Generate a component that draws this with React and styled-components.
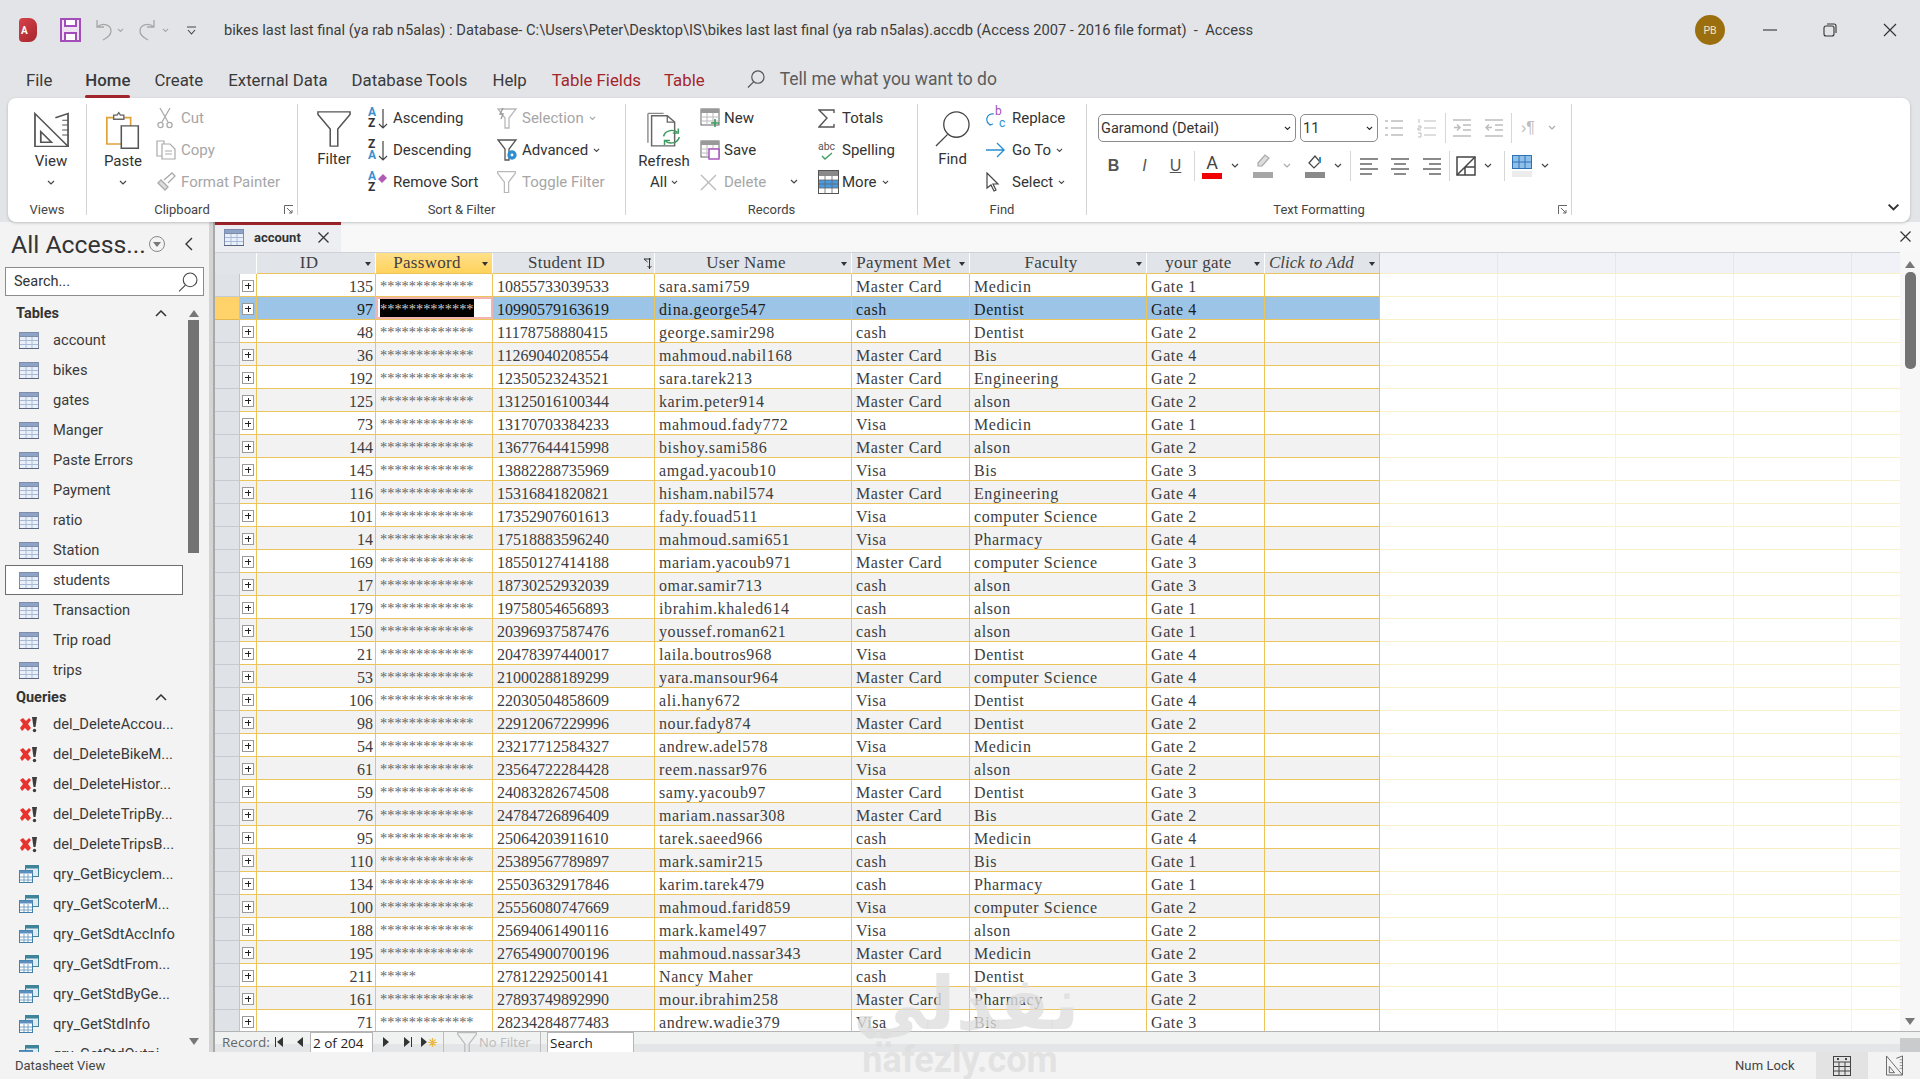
import React from "react";
import styled, { createGlobalStyle } from "styled-components";

const GlobalStyle = createGlobalStyle`
  html, body { margin: 0; padding: 0; overflow: hidden; background: #f3f3f3; }
  * { box-sizing: border-box; }
`;

const UI = `Roboto, "Liberation Sans", sans-serif`;
const SERIF = `"Liberation Serif", serif`;

const rows = [
  [135, "10855733039533", "sara.sami759", "Master Card", "Medicin", "Gate 1"],
  [97, "10990579163619", "dina.george547", "cash", "Dentist", "Gate 4"],
  [48, "11178758880415", "george.samir298", "cash", "Dentist", "Gate 2"],
  [36, "11269040208554", "mahmoud.nabil168", "Master Card", "Bis", "Gate 4"],
  [192, "12350523243521", "sara.tarek213", "Master Card", "Engineering", "Gate 2"],
  [125, "13125016100344", "karim.peter914", "Master Card", "alson", "Gate 2"],
  [73, "13170703384233", "mahmoud.fady772", "Visa", "Medicin", "Gate 1"],
  [144, "13677644415998", "bishoy.sami586", "Master Card", "alson", "Gate 2"],
  [145, "13882288735969", "amgad.yacoub10", "Visa", "Bis", "Gate 3"],
  [116, "15316841820821", "hisham.nabil574", "Master Card", "Engineering", "Gate 4"],
  [101, "17352907601613", "fady.fouad511", "Visa", "computer Science", "Gate 2"],
  [14, "17518883596240", "mahmoud.sami651", "Visa", "Pharmacy", "Gate 4"],
  [169, "18550127414188", "mariam.yacoub971", "Master Card", "computer Science", "Gate 3"],
  [17, "18730252932039", "omar.samir713", "cash", "alson", "Gate 3"],
  [179, "19758054656893", "ibrahim.khaled614", "cash", "alson", "Gate 1"],
  [150, "20396937587476", "youssef.roman621", "cash", "alson", "Gate 1"],
  [21, "20478397440017", "laila.boutros968", "Visa", "Dentist", "Gate 4"],
  [53, "21000288189299", "yara.mansour964", "Master Card", "computer Science", "Gate 4"],
  [106, "22030504858609", "ali.hany672", "Visa", "Dentist", "Gate 4"],
  [98, "22912067229996", "nour.fady874", "Master Card", "Dentist", "Gate 2"],
  [54, "23217712584327", "andrew.adel578", "Visa", "Medicin", "Gate 2"],
  [61, "23564722284428", "reem.nassar976", "Visa", "alson", "Gate 2"],
  [59, "24083282674508", "samy.yacoub97", "Master Card", "Dentist", "Gate 3"],
  [76, "24784726896409", "mariam.nassar308", "Master Card", "Bis", "Gate 2"],
  [95, "25064203911610", "tarek.saeed966", "cash", "Medicin", "Gate 4"],
  [110, "25389567789897", "mark.samir215", "cash", "Bis", "Gate 1"],
  [134, "25503632917846", "karim.tarek479", "cash", "Pharmacy", "Gate 1"],
  [100, "25556080747669", "mahmoud.farid859", "Visa", "computer Science", "Gate 2"],
  [188, "25694061490116", "mark.kamel497", "Visa", "alson", "Gate 2"],
  [195, "27654900700196", "mahmoud.nassar343", "Master Card", "Medicin", "Gate 2"],
  [211, "27812292500141", "Nancy Maher", "cash", "Dentist", "Gate 3"],
  [161, "27893749892990", "mour.ibrahim258", "Master Card", "Pharmacy", "Gate 2"],
  [71, "28234284877483", "andrew.wadie379", "Visa", "Bis", "Gate 3"],
];

const tables = ["account", "bikes", "gates", "Manger", "Paste Errors", "Payment", "ratio", "Station", "students", "Transaction", "Trip road", "trips"];
const deletes = ["del_DeleteAccou...", "del_DeleteBikeM...", "del_DeleteHistor...", "del_DeleteTripBy...", "del_DeleteTripsB..."];
const selects = ["qry_GetBicyclem...", "qry_GetScoterM...", "qry_GetSdtAccInfo", "qry_GetSdtFrom...", "qry_GetStdByGe...", "qry_GetStdInfo", "qry_GetStdOutpi..."];

/* ---------- icons ---------- */
const Chev = ({ w = 8, c = "#444" }) => (
  <svg width={w} height={w * 0.7} viewBox="0 0 8 5.6"><path d="M1 1l3 3 3-3" fill="none" stroke={c} strokeWidth="1.2" /></svg>
);
const SetSquare = ({ w = 35, h = 36 }) => (
  <svg width={w} height={h} viewBox="0 0 36 44" preserveAspectRatio="none" fill="none" stroke="#555" strokeWidth="1.8">
    <path d="M1 2l34 40H1z" /><path d="M7 24l11 13H7z" />
    <path d="M22 7l13-5v40" /><path d="M29 10h6M29 16h6M29 22h6M29 28h6" strokeWidth="1.2" />
  </svg>
);
const PasteIcon = () => (
  <svg width="34" height="38" viewBox="0 0 40 46" preserveAspectRatio="none" fill="none">
    <path d="M1 8h28v32H1z" stroke="#e0a33a" strokeWidth="2" fill="#fff" />
    <path d="M9 8V5h4l2-3 2 3h4v5H9z" stroke="#666" strokeWidth="1.6" fill="#fff" />
    <path d="M18 18h20v27H18z" stroke="#555" strokeWidth="1.8" fill="#fff" />
  </svg>
);
const Funnel = ({ w = 36, h, c = "#555", sw = 1.6 }) => (
  <svg width={w} height={h || w * 1.17} viewBox="0 0 36 42" preserveAspectRatio="none" fill="none" stroke={c} strokeWidth={sw}>
    <path d="M1 1h34v3L22 21v20h-8V21L1 4z" />
  </svg>
);
const Scissors = () => (
  <svg width="18" height="22" viewBox="0 0 18 22" fill="none" stroke="#aaa" strokeWidth="1.3">
    <path d="M4 1l8 14M14 1L6 15" /><circle cx="4.5" cy="18" r="2.6" /><circle cx="13.5" cy="18" r="2.6" />
  </svg>
);
const CopyIcon = () => (
  <svg width="20" height="20" viewBox="0 0 20 20" fill="none" stroke="#aaa" strokeWidth="1.2">
    <path d="M1 1h7v15H1z" /><path d="M6 4h8l5 5v10H6z" fill="#fff" /><path d="M9 11h7M9 14h7" />
  </svg>
);
const Brush = () => (
  <svg width="20" height="20" viewBox="0 0 20 20" fill="none" stroke="#aaa" strokeWidth="1.3">
    <path d="M2 11l7 7 3-3-7-7z" fill="#ddd" /><path d="M8 8l8-7 3 3-7 7" />
  </svg>
);
const SortIcon = ({ top = "A", bottom = "Z", mark }) => (
  <IconStack>
    <AZ $c={top === "A" ? "#3a8fd0" : "#333"}>{top}</AZ>
    <AZ $c={bottom === "A" ? "#3a8fd0" : "#333"} $low>{bottom}</AZ>
    {mark === "arrow" && (
      <svg width="10" height="20" viewBox="0 0 10 20" fill="none" stroke="#444" strokeWidth="1.2"><path d="M5 0v19M1 15l4 4 4-4" /></svg>
    )}
    {mark === "eraser" && (
      <svg width="11" height="11" viewBox="0 0 11 11"><path d="M1 6l5-5 4 4-5 5z" fill="#b05bb5" /></svg>
    )}
  </IconStack>
);
const Bolt = () => (
  <svg width="20" height="22" viewBox="0 0 20 22" fill="none" stroke="#b9b9b9" strokeWidth="1.3">
    <path d="M1 2h18L12 11v10H8V11z" /><path d="M6 1L3 7h3l-2 5" stroke="#999" />
  </svg>
);
const AdvFilter = () => (
  <svg width="22" height="22" viewBox="0 0 22 22" fill="none" stroke="#555" strokeWidth="1.3">
    <path d="M1 1h18l-7 9v11H8V10z" />
    <circle cx="15" cy="16" r="4" fill="#2a8fd0" stroke="#2a8fd0" /><circle cx="15" cy="16" r="1.4" fill="#fff" stroke="none" />
  </svg>
);
const RefreshIcon = () => (
  <svg width="35" height="38" viewBox="0 0 38 48" preserveAspectRatio="none" fill="none">
    <path d="M1 3h17M1 3v37" stroke="#888" strokeWidth="1.5" />
    <path d="M5 6h17l8 8v30H5z" stroke="#666" strokeWidth="1.6" fill="#fff" />
    <path d="M22 6v8h8" stroke="#666" strokeWidth="1.4" />
    <path d="M18 32a9 9 0 0 1 15-5M35 33a9 9 0 0 1-15 5" stroke="#3d9b5f" strokeWidth="1.8" fill="none" />
    <path d="M34 22v6h-6M19 43v-6h6" stroke="#3d9b5f" strokeWidth="1.6" />
  </svg>
);
const SheetSmall = ({ kind }) => (
  <svg width="20" height="20" viewBox="0 0 20 20" fill="none">
    <rect x="1" y="1" width="18" height="16" fill="#fff" stroke="#666" />
    <rect x="1" y="1" width="18" height="4" fill="#999" />
    <path d="M1 9h18M1 13h18M7 5v12M13 5v12" stroke="#bbb" />
    {kind === "new" && <path d="M15 11v8M11 15h8" stroke="#3d9b5f" strokeWidth="1.6" />}
    {kind === "save" && <rect x="9" y="9" width="10" height="10" fill="#fff" stroke="#a34dbb" strokeWidth="1.4" />}
  </svg>
);
const XMark = () => (
  <svg width="17" height="17" viewBox="0 0 17 17" fill="none" stroke="#bbb" strokeWidth="1.4"><path d="M1 1l15 15M16 1L1 16" /></svg>
);
const Sigma = () => (
  <svg width="17" height="19" viewBox="0 0 17 19" fill="none" stroke="#555" strokeWidth="1.4"><path d="M16 4V1H1l8 8-8 9h15v-3" /></svg>
);
const Spell = () => (
  <SpellBox>
    <span>abc</span>
    <svg width="12" height="8" viewBox="0 0 12 8" fill="none" stroke="#3d9b5f" strokeWidth="1.3"><path d="M1 4l3 3 7-6" /></svg>
  </SpellBox>
);
const MoreIcon = () => (
  <svg width="21" height="24" viewBox="0 0 21 24" fill="none">
    <rect x="0.5" y="0.5" width="20" height="23" fill="#fff" stroke="#555" />
    <rect x="1" y="1" width="19" height="5" fill="#8a8a8a" />
    <rect x="1" y="10" width="19" height="8" fill="#4a9ae0" />
    <path d="M1 10h19M1 14h19M1 18h19M7 6v17M14 6v17" stroke="#666" strokeWidth="0.8" />
  </svg>
);
const Lens = ({ s = 38, c = "#444", sw = 1.3 }) => (
  <svg width={s} height={s} viewBox="0 0 38 38" fill="none" stroke={c} strokeWidth={sw * (38 / s)}>
    <circle cx="23" cy="15" r="13" /><path d="M14 25L2 37" />
  </svg>
);
const ReplaceIcon = () => (
  <ReplaceBox>
    <b>b</b><i>c</i>
    <svg width="10" height="14" viewBox="0 0 10 14" fill="none" stroke="#2a8fd0" strokeWidth="1.2"><path d="M8 1a5 5 0 0 0-3 11M1 9l3 3 3-1" /></svg>
  </ReplaceBox>
);
const GoTo = () => (
  <svg width="19" height="16" viewBox="0 0 19 16" fill="none" stroke="#2a8fd0" strokeWidth="1.4"><path d="M0 8h18M11 1l7 7-7 7" /></svg>
);
const Arrow = () => (
  <svg width="14" height="20" viewBox="0 0 14 20" fill="#fff" stroke="#444" strokeWidth="1.2"><path d="M1 1v15l4-3 3 6 2-1-3-6h5z" /></svg>
);
const Launcher = () => (
  <svg width="10" height="10" viewBox="0 0 10 10" fill="none" stroke="#666"><path d="M0.5 9V0.5H9" /><path d="M3 3l5 5M8 5v3H5" /></svg>
);
const Lines = ({ kind }) => {
  const c = "#bdbdbd";
  if (kind === "bullets") return <svg width="20" height="20" viewBox="0 0 20 20" fill="none" stroke={c} strokeWidth="1.5"><path d="M7 3h12M7 10h12M7 17h12M1 3h3M1 10h3M1 17h3" /></svg>;
  if (kind === "numbers") return <svg width="20" height="20" viewBox="0 0 20 20" fill="none" stroke={c} strokeWidth="1.5"><path d="M7 3h12M7 10h12M7 17h12M2 1v4M1 8h3v2H1v2h3M1 15h3v4H1" strokeWidth="1" /></svg>;
  if (kind === "indent") return <svg width="20" height="20" viewBox="0 0 20 20" fill="none" stroke={c} strokeWidth="1.5"><path d="M1 2h18M11 7h8M11 12h8M1 18h18M2 9.5h6M5 6.5l3 3-3 3" /></svg>;
  return <svg width="20" height="20" viewBox="0 0 20 20" fill="none" stroke={c} strokeWidth="1.5"><path d="M1 2h18M11 7h8M11 12h8M1 18h18M8 9.5H2M5 6.5l-3 3 3 3" /></svg>;
};
const Align = ({ kind }) => {
  const d = { left: "M1 2h18M1 7h12M1 12h18M1 17h12", center: "M1 2h18M4 7h12M1 12h18M4 17h12", right: "M1 2h18M7 7h12M1 12h18M7 17h12" }[kind];
  return <svg width="20" height="19" viewBox="0 0 20 19" fill="none" stroke="#666" strokeWidth="1.5"><path d={d} /></svg>;
};
const BorderIcon = () => (
  <svg width="20" height="20" viewBox="0 0 20 20" fill="none" stroke="#444" strokeWidth="1.5"><rect x="1" y="1" width="18" height="18" /><path d="M1 19L19 1M9 11h10M9 11v8" /></svg>
);
const GridIcon = () => (
  <GridStack>
    <svg width="20" height="14" viewBox="0 0 20 14" fill="none"><rect x="0.5" y="0.5" width="19" height="13" fill="#8fc0ea" stroke="#2f73b5" /><path d="M0 7h20M7 0v14M13 0v14" stroke="#2f73b5" /></svg>
    <GridBar />
  </GridStack>
);
const Highlighter = () => (
  <ColorStack>
    <svg width="16" height="16" viewBox="0 0 16 16" fill="#ddd" stroke="#aaa" strokeWidth="1.2"><path d="M3 9l7-8 4 3-7 8H3z" /></svg>
    <ColorBar $c="#a6a6a6" />
  </ColorStack>
);
const FillIcon = () => (
  <ColorStack>
    <svg width="16" height="16" viewBox="0 0 16 16" fill="none" stroke="#444" strokeWidth="1.2"><path d="M2 9l6-7 5 6-6 6z" /><path d="M13 3v6" stroke="#2a8fd0" strokeWidth="2" /></svg>
    <ColorBar $c="#8a8a8a" />
  </ColorStack>
);
const TableGlyph = () => (
  <svg width="20" height="17" viewBox="0 0 20 17" fill="none">
    <rect x="0.5" y="0.5" width="19" height="16" fill="#eaf0fa" stroke="#7f8da8" />
    <rect x="0.5" y="0.5" width="19" height="4" fill="#8ea3c8" stroke="#7f8da8" />
    <path d="M1 8.5h18M1 12.5h18M7 5v11M13 5v11" stroke="#a9bad6" />
    <path d="M0 16.5h20" stroke="#59647c" />
  </svg>
);
const DeleteQuery = () => (
  <svg width="20" height="17" viewBox="0 0 20 17">
    <path d="M1 4l3-2 3 3 3-3 2 2-3 4 3 4-3 3-3-3-3 3-2-3 3-4z" fill="#e8322e" />
    <path d="M13 1h5l-1.500 10h-2z" fill="#3c3c3c" /><circle cx="15.500" cy="14.500" r="1.700" fill="#3c3c3c" />
  </svg>
);
const SelectQuery = () => (
  <svg width="20" height="18" viewBox="0 0 20 18" fill="none">
    <rect x="6.500" y="0.500" width="13" height="11" fill="#dfeaf2" stroke="#3f8499" />
    <rect x="6.500" y="0.500" width="13" height="3" fill="#3f8499" />
    <rect x="0.500" y="5.500" width="13" height="12" fill="#fff" stroke="#3f7fa8" />
    <rect x="0.500" y="5.500" width="13" height="3" fill="#5b8fc0" />
    <path d="M1 12h12M1 15h12M5 9v8M9 9v8" stroke="#7ba6c8" />
  </svg>
);

/* ---------- shell ---------- */
const Window = styled.div`
  position: relative;
  width: 1920px;
  height: 1079px;
  display: flex;
  flex-direction: column;
  overflow: hidden;
  background: #e2e4e8;
  font-family: ${UI};
  color: #333;
`;
const TitleBar = styled.div`
  height: 60px;
  display: flex;
  align-items: center;
  flex: none;
`;
const QuickSlot = styled.div`
  width: ${(p) => p.$w}px;
  margin-left: ${(p) => p.$ml || 0}px;
  display: flex;
  justify-content: center;
  align-items: center;
`;
const LogoBox = styled.div`
  width: 19px;
  height: 24px;
  border-radius: 4px 8px 8px 4px;
  background: linear-gradient(135deg, #d9414a, #a4262c);
  color: #fff;
  font-size: 10px;
  font-weight: 700;
  display: flex;
  align-items: center;
  padding-left: 2px;
`;
const TitleText = styled.div`
  flex: 1;
  margin-left: 28px;
  font-size: 14.700px;
  color: #3c3c3c;
  white-space: pre;
`;
const Avatar = styled.div`
  width: 30px;
  height: 30px;
  margin-right: 15px;
  border-radius: 50%;
  background: #9c6f0e;
  color: #f4e6c0;
  font-size: 10.500px;
  display: flex;
  align-items: center;
  justify-content: center;
`;
const WinBtn = styled.div`
  width: 60px;
  display: flex;
  justify-content: center;
`;
const TabBar = styled.div`
  height: 38px;
  flex: none;
  display: flex;
  align-items: stretch;
  padding-left: 26px;
`;
const Tab = styled.div`
  position: relative;
  margin-left: ${(p) => p.$ml}px;
  font-size: 16.800px;
  line-height: 40px;
  white-space: nowrap;
  color: ${(p) => (p.$ctx ? "#a4262c" : "#3a3a3a")};
  font-weight: ${(p) => (p.$active ? 500 : 400)};
  ${(p) => p.$active && `&::after { content: ""; position: absolute; left: 0; right: 0; bottom: 0; height: 3px; background: #a4262c; border-radius: 2px; }`}
`;
const TellMe = styled.div`
  margin-left: 42px;
  display: flex;
  align-items: center;
  gap: 15px;
  font-size: 17.500px;
  color: #5c5c5c;
`;

/* ---------- ribbon ---------- */
const Ribbon = styled.div`
  position: relative;
  z-index: 2;
  flex: none;
  height: 124px;
  margin: 0 10px 0 8px;
  padding: 6px 0 7px;
  display: flex;
  background: #fff;
  border-radius: 8px;
  box-shadow: 0 1px 3px rgba(0, 0, 0, 0.22);
`;
const Group = styled.div`
  position: relative;
  width: ${(p) => p.$w}px;
  flex: none;
  display: flex;
  flex-direction: column;
  border-right: 1px solid #d4d4d4;
`;
const GroupBody = styled.div`
  flex: none;
  height: 99px;
  display: flex;
  padding-left: ${(p) => p.$pad || 0}px;
`;
const GroupLabel = styled.div`
  flex: none;
  text-align: center;
  font-size: 13px;
  line-height: 14px;
  color: #444;
  padding-right: ${(p) => p.$offset || 0}px;
`;
const LaunchSpot = styled.div`
  position: absolute;
  right: 3px;
  bottom: 0;
  line-height: 0;
`;
const BigBtn = styled.div`
  width: ${(p) => p.$w}px;
  flex: none;
  display: flex;
  flex-direction: column;
  align-items: center;
  padding-top: 4px;
  font-size: 15px;
  color: #333;
`;
const BigIcon = styled.div`
  height: ${(p) => p.$h || 43}px;
  display: flex;
  align-items: center;
  justify-content: center;
`;
const BigText = styled.div`
  line-height: 21px;
  min-height: 21px;
  display: flex;
  align-items: center;
  gap: 4px;
`;
const SmallCol = styled.div`
  width: ${(p) => p.$w}px;
  flex: none;
  margin-top: -2px;
  display: flex;
  flex-direction: column;
`;
const SmallBtn = styled.div`
  height: 32px;
  display: flex;
  align-items: center;
  font-size: 15px;
  white-space: nowrap;
  color: ${(p) => (p.$off ? "#a6a6a6" : "#333")};
  & > span { margin-right: 5px; }
`;
const SmallIcon = styled.div`
  width: ${(p) => p.$w || 25}px;
  flex: none;
  display: flex;
  align-items: center;
`;
const ChevGap = styled.div`
  margin-left: ${(p) => p.$ml}px;
  line-height: 0;
`;
const IconStack = styled.div`
  position: relative;
  width: 21px;
  height: 24px;
  & > svg { position: absolute; right: 1px; top: 3px; }
`;
const AZ = styled.div`
  position: absolute;
  left: 0;
  top: ${(p) => (p.$low ? 11 : 0)}px;
  font-size: 12px;
  line-height: 12px;
  font-weight: 700;
  color: ${(p) => p.$c};
`;
const SpellBox = styled.div`
  display: flex;
  flex-direction: column;
  align-items: center;
  font-size: 10.500px;
  line-height: 11px;
  color: #555;
`;
const ReplaceBox = styled.div`
  position: relative;
  width: 21px;
  height: 24px;
  font-size: 12px;
  & > b { position: absolute; left: 9px; top: -2px; font-weight: 400; color: #a34dbb; }
  & > i { position: absolute; left: 13px; top: 10px; font-style: normal; color: #2a8fd0; }
  & > svg { position: absolute; left: 0; top: 7px; }
`;
const FmtRow = styled.div`
  height: ${(p) => p.$h}px;
  margin-top: ${(p) => p.$mt}px;
  display: flex;
  align-items: center;
`;
const Select = styled.div`
  width: ${(p) => p.$w}px;
  height: 28px;
  margin-left: ${(p) => p.$ml || 0}px;
  padding: 0 4px 0 2px;
  display: flex;
  align-items: center;
  justify-content: space-between;
  font-size: 14.500px;
  color: #333;
  border: 1px solid #8c8c8c;
  border-radius: 5px;
`;
const Slot = styled.div`
  width: ${(p) => p.$w}px;
  margin-left: ${(p) => p.$ml || 0}px;
  flex: none;
  display: flex;
  align-items: center;
  justify-content: center;
  line-height: 0;
`;
const Sep = styled.div`
  width: 1px;
  height: 30px;
  flex: none;
  margin-left: ${(p) => p.$ml || 0}px;
  background: #d6d6d6;
`;
const FontMark = styled.span`
  font-family: "Liberation Sans", sans-serif;
  font-size: 16px;
  line-height: 20px;
  color: #555;
  font-weight: ${(p) => (p.$b ? 700 : 400)};
  font-style: ${(p) => (p.$i ? "italic" : "normal")};
  text-decoration: ${(p) => (p.$u ? "underline" : "none")};
`;
const ParaMark = styled(FontMark)`
  color: #bdbdbd;
`;
const ColorStack = styled.div`
  display: flex;
  flex-direction: column;
  align-items: center;
  gap: 2px;
`;
const ColorBar = styled.div`
  width: 20px;
  height: 6px;
  background: ${(p) => p.$c};
`;
const FontA = styled.div`
  font-size: 18px;
  line-height: 17px;
  color: #444;
`;
const GridStack = styled(ColorStack)``;
const GridBar = styled.div`
  width: 20px;
  height: 6px;
  background: #ececec;
`;
const Collapse = styled.div`
  position: absolute;
  right: 10px;
  bottom: 10px;
  line-height: 0;
`;

/* ---------- main ---------- */
const Main = styled.div`
  flex: none;
  height: 830px;
  display: flex;
  background: #f3f3f3;
`;
const Nav = styled.div`
  width: 209px;
  flex: none;
  display: flex;
  flex-direction: column;
  background: #f3f3f3;
`;
const NavHead = styled.div`
  height: 45px;
  padding: 0 0 1px 11px;
  display: flex;
  align-items: center;
  font-size: 24.800px;
  color: #333;
`;
const NavHeadTitle = styled.div`
  width: 138px;
  white-space: nowrap;
`;
const NavCaret = styled.div`
  width: 16px;
  height: 16px;
  border: 1px solid #888;
  border-radius: 50%;
  display: flex;
  align-items: center;
  justify-content: center;
`;
const NavBack = styled.div`
  margin-left: 19px;
  line-height: 0;
`;
const NavSearch = styled.div`
  height: 29px;
  margin-left: 5px;
  width: 199px;
  padding: 0 5px 0 8px;
  flex: none;
  display: flex;
  align-items: center;
  justify-content: space-between;
  font-size: 14.500px;
  background: #fff;
  border: 1px solid #8c8c8c;
`;
const NavBody = styled.div`
  flex: 1;
  min-height: 0;
  margin-top: 5px;
  display: flex;
`;
const NavList = styled.div`
  width: 183px;
  flex: none;
  overflow: hidden;
`;
const NavSection = styled.div`
  height: 24px;
  padding: 0 16px;
  display: flex;
  align-items: center;
  justify-content: space-between;
  font-size: 14.500px;
  font-weight: 700;
  color: #333;
`;
const NavItem = styled.div`
  height: 30px;
  margin-left: 5px;
  padding-left: 14px;
  display: flex;
  align-items: center;
  gap: 14px;
  font-size: 14.700px;
  white-space: nowrap;
  color: #3a3a3a;
  ${(p) => p.$on && `background: #fff; border: 1px solid #6e6e6e; padding-left: 13px;`}
`;
const VBar = styled.div`
  display: flex;
  flex-direction: column;
  align-items: center;
  width: ${(p) => p.$w}px;
  flex: none;
  padding-top: ${(p) => p.$top}px;
  background: ${(p) => p.$bg || "transparent"};
`;
const UpTri = styled.div`
  width: 0;
  height: 0;
  border-left: 5.500px solid transparent;
  border-right: 5.500px solid transparent;
  border-bottom: 7px solid #777;
`;
const DownTri = styled(UpTri)`
  border-bottom: none;
  border-top: 7px solid #777;
  margin-top: auto;
  margin-bottom: ${(p) => p.$mb}px;
`;
const Thumb = styled.div`
  width: ${(p) => p.$w}px;
  height: ${(p) => p.$h}px;
  margin-top: ${(p) => p.$mt}px;
  background: #737373;
  border-radius: ${(p) => p.$r || 0}px;
`;
const Splitter = styled.div`
  width: 6px;
  flex: none;
  background: #d4d4d4;
  border-right: 2px solid #a9a9a9;
`;
const Doc = styled.div`
  flex: 1;
  min-width: 0;
  display: flex;
  flex-direction: column;
  background: #f8f8f8;
`;
const TabStrip = styled.div`
  height: 30px;
  flex: none;
  display: flex;
  justify-content: space-between;
  align-items: center;
`;
const DocTab = styled.div`
  width: 126px;
  height: 30px;
  padding: 0 0 3px 9px;
  display: flex;
  align-items: center;
  font-size: 13px;
  font-weight: 700;
  color: #333;
  background: #eceef2;
  border-top: 3px solid #a4262c;
  & > svg:first-child { margin-right: 10px; }
`;
const TabClose = styled.div`
  margin-left: 17px;
  line-height: 0;
`;
const StripClose = styled.div`
  margin: 0 9px 2px 0;
  line-height: 0;
`;
const Sheet = styled.div`
  flex: none;
  height: 779px;
  display: flex;
  background: #fff;
`;
const Grid = styled.div`
  width: 1685px;
  flex: none;
  overflow: hidden;
`;
const HeadRow = styled.div`
  height: 22px;
  display: flex;
  background: #f0f2f8;
  border-top: 1px solid #cfd2d6;
`;
const Row = styled.div`
  height: 23px;
  display: flex;
  border-bottom: 1px solid #ecc45c;
  background: ${(p) => (p.$sel ? "#9bc4e6" : p.$alt ? "#f2f2f2" : "#fff")};
`;
const Corner = styled.div`
  width: 42px;
  flex: none;
  background: #e1e4e8;
  border-right: 1px solid #fff;
`;
const HeadCell = styled.div`
  position: relative;
  width: ${(p) => p.$w}px;
  flex: none;
  padding-right: 14px;
  font-family: ${SERIF};
  font-style: ${(p) => (p.$it ? "italic" : "normal")};
  font-size: 17px;
  letter-spacing: ${(p) => (p.$it ? 0 : 0.3)}px;
  line-height: 19px;
  white-space: nowrap;
  overflow: hidden;
  text-align: ${(p) => (p.$it ? "left" : "center")};
  padding-left: ${(p) => (p.$it ? "4px" : "0")};
  color: ${(p) => (p.$it ? "#444" : "#3f3f3f")};
  background: ${(p) => (p.$on ? "linear-gradient(#ffe08a, #ffd25c)" : "#e1e4e8")};
  border-right: 1px solid ${(p) => (p.$it ? "#ecc45c" : "#fff")};
  border-bottom: 1px solid #ecc45c;
`;
const HeadDrop = styled.div`
  position: absolute;
  right: 4px;
  top: 9px;
  width: 0;
  height: 0;
  border-left: 3.500px solid transparent;
  border-right: 3.500px solid transparent;
  border-top: 4px solid #333;
`;
const SortMark = styled.div`
  position: absolute;
  right: 1px;
  top: 5px;
  line-height: 0;
`;
const FillHead = styled.div`
  width: 118px;
  flex: none;
  border-right: 1px solid #e3e6ee;
  border-bottom: 1px solid #f6efc8;
`;
const Fill = styled.div`
  width: 118px;
  flex: none;
  height: 23px;
  margin-bottom: -1px;
  background: #fff;
  border-right: 1px solid #f8f3d4;
  border-bottom: 1px solid #f8f1cb;
`;
const Selector = styled.div`
  width: 24px;
  flex: none;
  margin-bottom: -1px;
  background: ${(p) => (p.$sel ? "#ffd36a" : "#dfe3e8")};
  border-bottom: 1px solid ${(p) => (p.$sel ? "#e5b84f" : "#c6cbd1")};
`;
const Expander = styled.div`
  width: 18px;
  flex: none;
  padding-top: 1px;
  display: flex;
  align-items: center;
  justify-content: center;
  border-right: 1px solid #ecc45c;
  border-left: 1px solid #ecc45c;
`;
const PlusBox = styled.div`
  width: 10px;
  height: 10px;
  font-size: 0;
  background:
    linear-gradient(#222, #222) center / 6px 1px no-repeat,
    linear-gradient(#222, #222) center / 1px 6px no-repeat,
    #fff;
  outline: 1px solid #9a9a9a;
`;
const Cell = styled.div`
  width: ${(p) => p.$w}px;
  flex: none;
  padding: 0 ${(p) => (p.$right ? 2 : 4)}px 0 4px;
  font-family: ${SERIF};
  font-size: 16px;
  line-height: 25px;
  letter-spacing: ${(p) => (p.$wide ? 0.6 : 0)}px;
  white-space: nowrap;
  overflow: hidden;
  text-align: ${(p) => (p.$right ? "right" : "left")};
  color: ${(p) => (p.$sel ? "#1c1c1c" : "#3d3d3d")};
  border-right: 1px solid #ecc45c;
`;
const PassCell = styled(Cell)`
  padding: 4px 0 0 4px;
  font-size: 14.400px;
  line-height: 17px;
  color: #666;
  ${(p) => p.$active && `background: #fff; outline: 2px solid #f2b3b3; outline-offset: -2px; padding: 2px 0 0 4px;`}
`;
const Masked = styled.span`
  display: inline-block;
  height: 19px;
  line-height: 21px;
  background: #000;
  color: #c8c8c8;
`;
const RecordBar = styled.div`
  height: 21px;
  flex: none;
  display: flex;
  align-items: stretch;
  font-family: "Open Sans", sans-serif;
  font-size: 13.500px;
  color: #666;
  background: linear-gradient(#f0f2f2 0 12px, #e3e5e6 12px);
  border-top: 1px solid #b4b4b4;
`;
const RecLabel = styled.div`
  margin-left: 7px;
  width: 50px;
  line-height: 20px;
`;
const RecBtn = styled.div`
  width: ${(p) => p.$w}px;
  margin-left: ${(p) => p.$ml || 0}px;
  flex: none;
  display: flex;
  align-items: center;
  justify-content: center;
  gap: 1px;
`;
const RecBox = styled.div`
  width: ${(p) => p.$w}px;
  margin-left: ${(p) => p.$ml || 0}px;
  flex: none;
  padding-left: 2px;
  line-height: 20px;
  color: #222;
  background: #fff;
  border: 1px solid #b5b5b5;
  border-bottom: none;
`;
const RecSep = styled.div`
  width: 1px;
  flex: none;
  margin-left: ${(p) => p.$ml}px;
  background: #bdbdbd;
`;
const NoFilter = styled.div`
  position: relative;
  margin-left: 13px;
  width: 83px;
  padding-left: 22px;
  font-size: 13px;
  line-height: 20px;
  color: #bbb;
  white-space: nowrap;
`;
const FunnelSpot = styled.div`
  position: absolute;
  left: 0;
  top: 0;
  height: 20px;
  overflow: hidden;
`;
const TriL = styled.div`
  width: 0;
  height: 0;
  border-top: 5px solid transparent;
  border-bottom: 5px solid transparent;
  border-right: 6px solid #333;
`;
const TriR = styled(TriL)`
  border-right: none;
  border-left: 6px solid #333;
`;
const Tick = styled.div`
  width: 1.500px;
  height: 10px;
  background: #333;
`;
const Corner2 = styled.div`
  width: 20px;
  flex: none;
  margin-left: auto;
  background: #c9cbcc;
  margin-top: 6px;
`;
const Status = styled.div`
  flex: none;
  height: 27px;
  display: flex;
  align-items: center;
  background: #f3f3f3;
  font-size: 13px;
  color: #444;
`;
const StatusText = styled.div`
  margin-left: 15px;
  flex: 1;
`;
const NumLock = styled.div`
  width: 81px;
  letter-spacing: 0.1px;
`;
const ViewBtn = styled.div`
  width: 52px;
  height: 27px;
  display: flex;
  align-items: center;
  justify-content: center;
  background: ${(p) => (p.$on ? "#e3e3e3" : "transparent")};
  line-height: 0;
`;
const Watermark = styled.div`
  position: absolute;
  left: 853px;
  top: 961px;
  width: 214px;
  z-index: 5;
  text-align: center;
  pointer-events: none;
  color: rgba(222, 222, 222, 0.78);
  font-weight: 700;
`;
const WatermarkAr = styled.div`
  font-family: "DejaVu Sans", sans-serif;
  font-size: 74px;
  line-height: 84px;
  height: 67px;
`;
const WatermarkDots = styled.div`
  height: 12px;
  margin: 0 0 4px 12px;
  display: flex;
  gap: 4px;
  & > i { width: 11px; height: 11px; border-radius: 50%; background: rgba(222, 222, 222, 0.78); }
`;
const WatermarkEn = styled.div`
  font-family: Roboto, sans-serif;
  font-size: 36px;
  line-height: 32px;
`;

const columns = [119, 117, 162, 197, 118, 177, 118, 115];

const App = () => (
  <Window>
    <GlobalStyle />
    <TitleBar>
      <QuickSlot $w={18} $ml={19}><LogoBox>A</LogoBox></QuickSlot>
      <QuickSlot $w={22} $ml={22}>
        <svg width="21" height="24" viewBox="0 0 21 24" fill="none" stroke="#a34dbb" strokeWidth="2"><path d="M1 1h19v22H1z" fill="#efe3f3" /><path d="M5 1h11v7H5zM5 15h11v8H5z" fill="#fff" /></svg>
      </QuickSlot>
      <QuickSlot $w={18} $ml={13}>
        <svg width="18" height="22" viewBox="0 0 18 22" fill="none" stroke="#a6a6a6" strokeWidth="1.3"><path d="M3 1v7h7M3 8c6-5 14-2 14 4 0 4-4 7-8 9" /></svg>
      </QuickSlot>
      <QuickSlot $w={8} $ml={4}><Chev w={7} c="#a6a6a6" /></QuickSlot>
      <QuickSlot $w={18} $ml={15}>
        <svg width="18" height="22" viewBox="0 0 18 22" fill="none" stroke="#a6a6a6" strokeWidth="1.3"><path d="M15 1v7H8M15 8C9 3 1 6 1 12c0 4 4 7 8 9" /></svg>
      </QuickSlot>
      <QuickSlot $w={8} $ml={4}><Chev w={7} c="#a6a6a6" /></QuickSlot>
      <QuickSlot $w={10} $ml={17}>
        <svg width="9" height="9" viewBox="0 0 9 9" fill="none" stroke="#444" strokeWidth="1.1"><path d="M0 1h9M1 4l3.500 4L8 4" /></svg>
      </QuickSlot>
      <TitleText>bikes last last final (ya rab n5alas) : Database- C:\Users\Peter\Desktop\IS\bikes last last final (ya rab n5alas).accdb (Access 2007 - 2016 file format)  -  Access</TitleText>
      <Avatar>PB</Avatar>
      <WinBtn><svg width="14" height="2" viewBox="0 0 14 2"><path d="M0 1h14" stroke="#333" strokeWidth="1.1" /></svg></WinBtn>
      <WinBtn><svg width="14" height="14" viewBox="0 0 14 14" fill="none" stroke="#333" strokeWidth="1.1"><rect x="1" y="3" width="10" height="10" rx="2" /><path d="M4 1h7a2 2 0 0 1 2 2v7" /></svg></WinBtn>
      <WinBtn><svg width="14" height="14" viewBox="0 0 14 14" fill="none" stroke="#333" strokeWidth="1.200"><path d="M1 1l12 12M13 1L1 13" /></svg></WinBtn>
    </TitleBar>

    <TabBar>
      <Tab $ml={0}>File</Tab>
      <Tab $ml={33} $active>Home</Tab>
      <Tab $ml={24}>Create</Tab>
      <Tab $ml={25}>External Data</Tab>
      <Tab $ml={24}>Database Tools</Tab>
      <Tab $ml={25}>Help</Tab>
      <Tab $ml={25} $ctx>Table Fields</Tab>
      <Tab $ml={23} $ctx>Table</Tab>
      <TellMe><Lens s={18} c="#555" sw={1.2} />Tell me what you want to do</TellMe>
    </TabBar>

    <Ribbon>
      <Group $w={79}>
        <GroupBody $pad={9}>
          <BigBtn $w={68}><BigIcon><SetSquare /></BigIcon><BigText>View</BigText><BigText><Chev /></BigText></BigBtn>
        </GroupBody>
        <GroupLabel>Views</GroupLabel>
      </Group>
      <Group $w={211}>
        <GroupBody $pad={3}>
          <BigBtn $w={66}><BigIcon><PasteIcon /></BigIcon><BigText>Paste</BigText><BigText><Chev /></BigText></BigBtn>
          <SmallCol $w={130}>
            <SmallBtn $off><SmallIcon><Scissors /></SmallIcon>Cut</SmallBtn>
            <SmallBtn $off><SmallIcon><CopyIcon /></SmallIcon>Copy</SmallBtn>
            <SmallBtn $off><SmallIcon><Brush /></SmallIcon>Format Painter</SmallBtn>
          </SmallCol>
        </GroupBody>
        <GroupLabel $offset={20}>Clipboard</GroupLabel>
        <LaunchSpot><Launcher /></LaunchSpot>
      </Group>
      <Group $w={328}>
        <GroupBody $pad={2}>
          <BigBtn $w={68}><BigIcon $h={41}><Funnel w={34} h={36} /></BigIcon><BigText>Filter</BigText></BigBtn>
          <SmallCol $w={129}>
            <SmallBtn><SmallIcon><SortIcon mark="arrow" /></SmallIcon>Ascending</SmallBtn>
            <SmallBtn><SmallIcon><SortIcon top="Z" bottom="A" mark="arrow" /></SmallIcon>Descending</SmallBtn>
            <SmallBtn><SmallIcon><SortIcon mark="eraser" /></SmallIcon>Remove Sort</SmallBtn>
          </SmallCol>
          <SmallCol $w={120}>
            <SmallBtn $off><SmallIcon><Bolt /></SmallIcon><span>Selection</span><Chev w={7} c="#a6a6a6" /></SmallBtn>
            <SmallBtn><SmallIcon><AdvFilter /></SmallIcon><span>Advanced</span><Chev w={7} /></SmallBtn>
            <SmallBtn $off><SmallIcon><Funnel w={19} c="#b9b9b9" sw={2.4} /></SmallIcon>Toggle Filter</SmallBtn>
          </SmallCol>
        </GroupBody>
        <GroupLabel>Sort &amp; Filter</GroupLabel>
      </Group>
      <Group $w={292}>
        <GroupBody $pad={2}>
          <BigBtn $w={72}><BigIcon><RefreshIcon /></BigIcon><BigText>Refresh</BigText><BigText>All <Chev w={7} /></BigText></BigBtn>
          <SmallCol $w={118}>
            <SmallBtn><SmallIcon $w={24}><SheetSmall kind="new" /></SmallIcon>New</SmallBtn>
            <SmallBtn><SmallIcon $w={24}><SheetSmall kind="save" /></SmallIcon>Save</SmallBtn>
            <SmallBtn $off><SmallIcon $w={24}><XMark /></SmallIcon>Delete<ChevGap $ml={24}><Chev w={8} /></ChevGap></SmallBtn>
          </SmallCol>
          <SmallCol $w={96}>
            <SmallBtn><SmallIcon $w={24}><Sigma /></SmallIcon>Totals</SmallBtn>
            <SmallBtn><SmallIcon $w={24}><Spell /></SmallIcon>Spelling</SmallBtn>
            <SmallBtn><SmallIcon $w={24}><MoreIcon /></SmallIcon><span>More</span><Chev w={7} /></SmallBtn>
          </SmallCol>
        </GroupBody>
        <GroupLabel>Records</GroupLabel>
      </Group>
      <Group $w={169}>
        <GroupBody $pad={1}>
          <BigBtn $w={67}><BigIcon $h={41}><Lens s={37} /></BigIcon><BigText>Find</BigText></BigBtn>
          <SmallCol $w={100}>
            <SmallBtn><SmallIcon $w={26}><ReplaceIcon /></SmallIcon>Replace</SmallBtn>
            <SmallBtn><SmallIcon $w={26}><GoTo /></SmallIcon><span>Go To</span><Chev w={7} /></SmallBtn>
            <SmallBtn><SmallIcon $w={26}><Arrow /></SmallIcon><span>Select</span><Chev w={7} /></SmallBtn>
          </SmallCol>
        </GroupBody>
        <GroupLabel>Find</GroupLabel>
      </Group>
      <Group $w={485}>
        <GroupBody $pad={11}>
          <div>
            <FmtRow $h={28} $mt={10}>
              <Select $w={198}>Garamond (Detail)<Chev w={7} c="#222" /></Select>
              <Select $w={78} $ml={4}>11<Chev w={7} c="#222" /></Select>
              <Slot $w={32}><Lines kind="bullets" /></Slot>
              <Slot $w={34}><Lines kind="numbers" /></Slot>
              <Sep $ml={1} />
              <Slot $w={32}><Lines kind="indent" /></Slot>
              <Slot $w={32}><Lines kind="outdent" /></Slot>
              <Sep $ml={1} />
              <Slot $w={32}><ParaMark>›¶</ParaMark></Slot>
              <Slot $w={16}><Chev w={8} c="#aaa" /></Slot>
            </FmtRow>
            <FmtRow $h={32} $mt={8}>
              <Slot $w={31}><FontMark $b>B</FontMark></Slot>
              <Slot $w={31}><FontMark $i>I</FontMark></Slot>
              <Slot $w={31}><FontMark $u>U</FontMark></Slot>
              <Sep $ml={3} />
              <Slot $w={34}><ColorStack><FontA>A</FontA><ColorBar $c="#f00000" /></ColorStack></Slot>
              <Slot $w={12}><Chev w={8} /></Slot>
              <Slot $w={38} $ml={3}><Highlighter /></Slot>
              <Slot $w={10}><Chev w={8} c="#aaa" /></Slot>
              <Slot $w={38} $ml={4}><FillIcon /></Slot>
              <Slot $w={8}><Chev w={8} /></Slot>
              <Sep $ml={8} />
              <Slot $w={30} $ml={3}><Align kind="left" /></Slot>
              <Slot $w={32}><Align kind="center" /></Slot>
              <Slot $w={32}><Align kind="right" /></Slot>
              <Sep $ml={1} />
              <Slot $w={32}><BorderIcon /></Slot>
              <Slot $w={12}><Chev w={8} /></Slot>
              <Sep $ml={10} />
              <Slot $w={34}><GridIcon /></Slot>
              <Slot $w={12}><Chev w={8} /></Slot>
            </FmtRow>
          </div>
        </GroupBody>
        <GroupLabel $offset={20}>Text Formatting</GroupLabel>
        <LaunchSpot><Launcher /></LaunchSpot>
      </Group>
      <Collapse><Chev w={13} c="#333" /></Collapse>
    </Ribbon>

    <Main>
      <Nav>
        <NavHead>
          <NavHeadTitle>All Access...</NavHeadTitle>
          <NavCaret><svg width="8" height="5" viewBox="0 0 8 5"><path d="M0 0h8L4 5z" fill="#777" /></svg></NavCaret>
          <NavBack><svg width="9" height="14" viewBox="0 0 9 14" fill="none" stroke="#333" strokeWidth="1.400"><path d="M8 1L2 7l6 6" /></svg></NavBack>
        </NavHead>
        <NavSearch>Search...<Lens s={20} c="#444" sw={1.1} /></NavSearch>
        <NavBody>
          <NavList>
            <NavSection>Tables<svg width="12" height="7" viewBox="0 0 12 7" fill="none" stroke="#333" strokeWidth="1.500"><path d="M1 6l5-5 5 5" /></svg></NavSection>
            {tables.map((name) => (
              <NavItem key={name} $on={name === "students"}><TableGlyph />{name}</NavItem>
            ))}
            <NavSection>Queries<svg width="12" height="7" viewBox="0 0 12 7" fill="none" stroke="#333" strokeWidth="1.500"><path d="M1 6l5-5 5 5" /></svg></NavSection>
            {deletes.map((name) => (
              <NavItem key={name}><DeleteQuery />{name}</NavItem>
            ))}
            {selects.map((name) => (
              <NavItem key={name}><SelectQuery />{name}</NavItem>
            ))}
          </NavList>
          <VBar $w={21} $top={9}>
            <UpTri />
            <Thumb $w={11} $h={233} $mt={3} />
            <DownTri $mb={7} />
          </VBar>
        </NavBody>
      </Nav>
      <Splitter />
      <Doc>
        <TabStrip>
          <DocTab>
            <TableGlyph />account
            <TabClose><svg width="11" height="11" viewBox="0 0 11 11" fill="none" stroke="#333" strokeWidth="1.300"><path d="M0.500 0.500l10 10M10.500 0.500l-10 10" /></svg></TabClose>
          </DocTab>
          <StripClose><svg width="11" height="11" viewBox="0 0 11 11" fill="none" stroke="#333" strokeWidth="1.200"><path d="M0.500 0.500l10 10M10.500 0.500l-10 10" /></svg></StripClose>
        </TabStrip>
        <Sheet>
          <Grid>
            <HeadRow>
              <Corner />
              <HeadCell $w={119}>ID<HeadDrop /></HeadCell>
              <HeadCell $w={117} $on>Password<HeadDrop /></HeadCell>
              <HeadCell $w={162}>Student ID
                <SortMark><svg width="9" height="11" viewBox="0 0 9 11" fill="none" stroke="#333"><path d="M5.500 0v11M3.500 4L0 1h7M3.500 8l2 2 2-2" /></svg></SortMark>
              </HeadCell>
              <HeadCell $w={197}>User Name<HeadDrop /></HeadCell>
              <HeadCell $w={118}>Payment Met<HeadDrop /></HeadCell>
              <HeadCell $w={177}>Faculty<HeadDrop /></HeadCell>
              <HeadCell $w={118}>your gate<HeadDrop /></HeadCell>
              <HeadCell $w={115} $it>Click to Add<HeadDrop /></HeadCell>
              {[0, 1, 2, 3, 4].map((i) => <FillHead key={i} />)}
            </HeadRow>
            {rows.map((r, i) => {
              const sel = i === 1;
              const masked = r[0] === 211 ? "*****" : "*************";
              return (
                <Row key={r[0]} $sel={sel} $alt={i % 2 === 1}>
                  <Selector $sel={sel} />
                  <Expander><PlusBox /></Expander>
                  <Cell $w={columns[0]} $right $sel={sel}>{r[0]}</Cell>
                  <PassCell $w={columns[1]} $active={sel}>{sel ? <Masked>{masked}</Masked> : masked}</PassCell>
                  <Cell $w={columns[2]} $sel={sel}>{r[1]}</Cell>
                  <Cell $w={columns[3]} $wide $sel={sel}>{r[2]}</Cell>
                  <Cell $w={columns[4]} $wide $sel={sel}>{r[3]}</Cell>
                  <Cell $w={columns[5]} $wide $sel={sel}>{r[4]}</Cell>
                  <Cell $w={columns[6]} $wide $sel={sel}>{r[5]}</Cell>
                  <Cell $w={columns[7]} $sel={sel} />
                  {[0, 1, 2, 3, 4].map((n) => <Fill key={n} />)}
                </Row>
              );
            })}
          </Grid>
          <VBar $w={20} $top={9} $bg="#f7f7f7">
            <UpTri />
            <Thumb $w={11} $h={97} $mt={4} $r={5} />
            <DownTri $mb={6} />
          </VBar>
        </Sheet>
        <RecordBar>
          <RecLabel>Record:</RecLabel>
          <RecBtn $w={14}><Tick /><TriL /></RecBtn>
          <RecBtn $w={12} $ml={8}><TriL /></RecBtn>
          <RecBox $w={63} $ml={4}>2 of 204</RecBox>
          <RecBtn $w={12} $ml={7}><TriR /></RecBtn>
          <RecBtn $w={14} $ml={9}><TriR /><Tick /></RecBtn>
          <RecBtn $w={26} $ml={1}>
            <TriR />
            <svg width="9" height="9" viewBox="0 0 9 9" fill="none" stroke="#e9b94c" strokeWidth="1.200"><path d="M4.500 0v9M0 4.500h9M1.500 1.500l6 6M7.500 1.500l-6 6" /></svg>
          </RecBtn>
          <RecSep $ml={1} />
          <NoFilter>
            <FunnelSpot><Funnel w={20} c="#bdbdbd" sw={2.4} /></FunnelSpot>
            No Filter
          </NoFilter>
          <RecSep $ml={0} />
          <RecBox $w={87} $ml={6}>Search</RecBox>
          <Corner2 />
        </RecordBar>
      </Doc>
    </Main>

    <Status>
      <StatusText>Datasheet View</StatusText>
      <NumLock>Num Lock</NumLock>
      <ViewBtn $on>
        <svg width="18" height="20" viewBox="0 0 18 20" fill="none" stroke="#444"><rect x="0.500" y="0.500" width="17" height="19" /><path d="M0 6h18M0 10.500h18M0 15h18M6 6v14M12 6v14" /><path d="M4 3h2M12 3h2" strokeWidth="2" /></svg>
      </ViewBtn>
      <ViewBtn><SetSquare w={17} h={21} /></ViewBtn>
    </Status>

    <Watermark>
      <WatermarkAr>نفذلي</WatermarkAr>
      <WatermarkDots><i /><i /></WatermarkDots>
      <WatermarkEn>nafezly.com</WatermarkEn>
    </Watermark>
  </Window>
);

export default App;
